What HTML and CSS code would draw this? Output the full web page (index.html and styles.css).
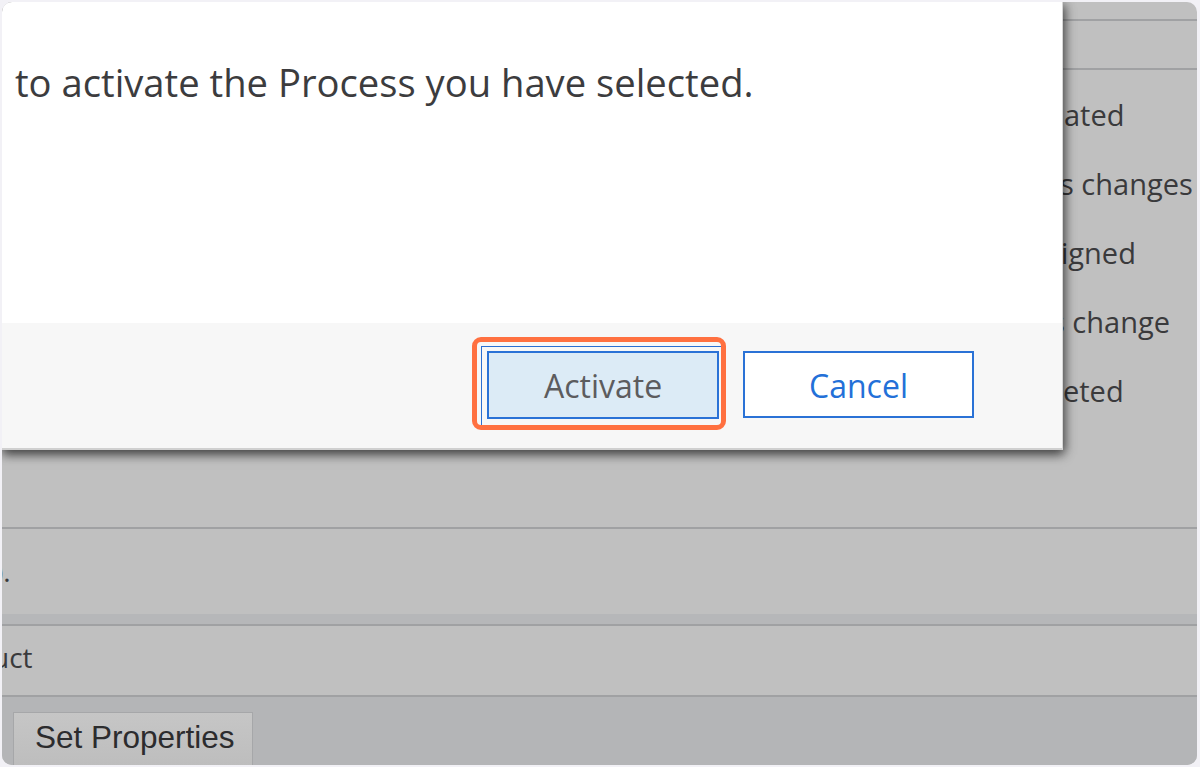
FILE: index.html
```html
<!DOCTYPE html>
<html lang="en">
<head>
<meta charset="utf-8">
<title>Activate Process</title>
<link rel="stylesheet" href="styles.css">
</head>
<body>
<div class="frame">
  <div class="bg">
    <div class="bg-top"></div>
    <div class="bg-head"></div>
    <ul class="bg-list">
      <li class="item item-1">ated</li>
      <li class="item item-2">s changes</li>
      <li class="item item-3">igned</li>
      <li class="item item-4">s change</li>
      <li class="item item-5">eted</li>
    </ul>
    <div class="bg-row2"><span class="frag">).</span></div>
    <div class="bg-band"></div>
    <div class="bg-row3"><span class="frag frag-uct">uct</span></div>
    <div class="bg-bottom">
      <button class="legacy-btn" type="button">Set Properties</button>
    </div>
  </div>

  <div class="dialog">
    <div class="dialog-body">
      <p class="message">to activate the Process you have selected.</p>
    </div>
    <div class="dialog-footer">
      <div class="btn-wrap">
        <span class="focus-ring"></span>
        <button class="btn btn-primary" type="button">Activate</button>
        <span class="highlight"></span>
      </div>
      <button class="btn btn-secondary" type="button">Cancel</button>
    </div>
  </div>
</div>
</body>
</html>
```

FILE: styles.css
```css
* { box-sizing: border-box; }

html, body {
  margin: 0;
  padding: 0;
  background: #f2f1f6;
}

.frame {
  position: relative;
  margin: 2px 0 0 2px;
  width: 1195px;
  height: 763px;
  border-radius: 10px;
  overflow: hidden;
  background: #c0c0c0;
  font-family: "Open Sans", "Noto Sans", sans-serif;
}

/* ---------- background page ---------- */
.bg {
  display: flex;
  flex-direction: column;
  height: 100%;
  color: #3a3a3c;
}

.bg > * { flex-shrink: 0; }

.bg-top {
  height: 19px;
  border-bottom: 2px solid #a0a1a3;
}

.bg-head {
  height: 49px;
  border-bottom: 2px solid #a0a1a3;
}

.bg-list {
  list-style: none;
  margin: 0;
  height: 459px;
  padding: 10px 0 0 1061px;
  border-bottom: 2px solid #a0a1a3;
  font-size: 29px;
  line-height: 69px;
  white-space: nowrap;
}

.item-1 { margin-left: 1px; }
.item-2 { margin-left: -3px; }
.item-3 { margin-left: -2px; }
.item-4 { margin-left: -12px; }
.item-5 { margin-left: 0; }

.bg-row2 {
  height: 85px;
  font-size: 28px;
  line-height: 84px;
}

.frag {
  display: inline-block;
  margin-left: -7px;
}

.bg-band {
  height: 12px;
  background: #b6b7b9;
  border-bottom: 2px solid #a0a1a3;
}

.bg-row3 {
  height: 71px;
  font-size: 28px;
  line-height: 63px;
  border-bottom: 2px solid #a0a1a3;
}

.frag-uct { margin-left: -10px; }

.bg-bottom {
  flex: 1 1 auto;
  min-height: 0;
  background: #b4b5b7;
  padding: 15px 0 0 11px;
}

.legacy-btn {
  display: block;
  width: 240px;
  height: 62px;
  margin: 0;
  padding: 0 0 12px 21px;
  border: 1px solid #a6a7a9;
  background: linear-gradient(#c6c6c6, #bcbcbc);
  font-family: "Liberation Sans", Arial, sans-serif;
  font-size: 31.5px;
  color: #2c2c2e;
  text-align: left;
  line-height: 36px;
  vertical-align: top;
}

/* ---------- dialog ---------- */
.dialog {
  position: absolute;
  left: 0;
  top: 0;
  width: 1061px;
  height: 448px;
  display: flex;
  flex-direction: column;
  background: #ffffff;
  border-right: 1px solid #d6d6d6;
  border-bottom: 2px solid #d0d0d0;
  box-shadow: 0 5px 10px rgba(0, 0, 0, 0.5), 3px 2px 10px rgba(0, 0, 0, 0.35);
}

.dialog-body {
  height: 321px;
  padding: 54px 0 0 13px;
}

.message {
  margin: 0;
  font-size: 38.2px;
  color: #3c3c3e;
  white-space: nowrap;
}

.dialog-footer {
  flex: 1;
  background: #f7f7f7;
  display: flex;
  align-items: center;
  justify-content: flex-end;
  gap: 24px;
  padding: 0 88px 2px 0;
}

.btn-wrap {
  position: relative;
  display: flex;
}

.btn {
  width: 231px;
  height: 67px;
  margin: 0;
  padding: 2px 0 0;
  border: 2px solid #2a72d6;
  font-family: "Open Sans", "Noto Sans", sans-serif;
  font-size: 32px;
  line-height: 1;
}

.btn-primary {
  width: 232px;
  height: 68px;
  background: #dcebf6;
  color: #5c5c5e;
}

.btn-secondary {
  background: #ffffff;
  color: #2370d8;
}

.focus-ring {
  position: absolute;
  left: -6px;
  top: -5px;
  width: 243px;
  height: 80px;
  border: 1px solid #2a6fd2;
}

.highlight {
  position: absolute;
  left: -15px;
  top: -14px;
  width: 254px;
  height: 93px;
  border: 5px solid #ff7040;
  border-radius: 9px;
}
```
